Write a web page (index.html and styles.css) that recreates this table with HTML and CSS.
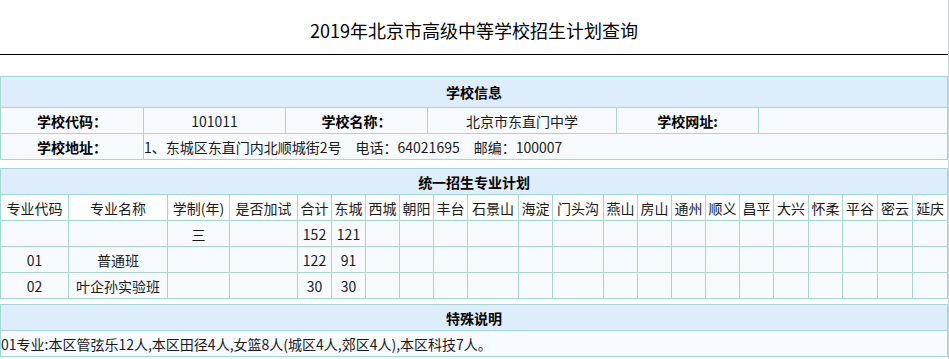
FILE: index.html
```html
<!DOCTYPE html>
<html lang="zh-CN">
<head>
<meta charset="utf-8">
<title>2019年北京市高级中等学校招生计划查询</title>
<link rel="stylesheet" href="styles.css">
</head>
<body>
<div class="page">
  <h1 class="title">2019年北京市高级中等学校招生计划查询</h1>

  <table class="tbl info">
    <colgroup>
      <col class="w143"><col class="w142"><col class="w142"><col class="w189"><col class="w142"><col class="w189">
    </colgroup>
    <tr class="head"><th colspan="6" class="sm">学校信息</th></tr>
    <tr>
      <td class="lbl">学校代码：</td>
      <td class="c">101011</td>
      <td class="lbl">学校名称：</td>
      <td class="c">北京市东直门中学</td>
      <td class="lbl">学校网址:</td>
      <td></td>
    </tr>
    <tr>
      <td class="lbl">学校地址：</td>
      <td colspan="5" class="l">1、东城区东直门内北顺城街2号　电话：64021695　邮编：100007</td>
    </tr>
  </table>

  <table class="tbl plan">
    <colgroup>
      <col style="width:68px"><col style="width:99px"><col style="width:62px"><col style="width:68px">
      <col style="width:34px"><col style="width:34px"><col style="width:34px"><col style="width:34px"><col style="width:34px">
      <col style="width:51px"><col style="width:34px"><col style="width:51px">
      <col style="width:34px"><col style="width:34px"><col style="width:34px"><col style="width:34px"><col style="width:34px">
      <col style="width:35px"><col style="width:34px"><col style="width:35px"><col style="width:35px"><col style="width:35px">
    </colgroup>
    <tr class="head"><th colspan="22">统一招生专业计划</th></tr>
    <tr class="cols">
      <td>专业代码</td><td>专业名称</td><td>学制(年)</td><td>是否加试</td>
      <td>合计</td><td>东城</td><td>西城</td><td>朝阳</td><td>丰台</td>
      <td>石景山</td><td>海淀</td><td>门头沟</td><td>燕山</td><td>房山</td>
      <td>通州</td><td>顺义</td><td>昌平</td><td>大兴</td><td>怀柔</td>
      <td>平谷</td><td>密云</td><td>延庆</td>
    </tr>
    <tr>
      <td></td><td></td><td>三</td><td></td><td>152</td><td>121</td>
      <td></td><td></td><td></td><td></td><td></td><td></td><td></td><td></td>
      <td></td><td></td><td></td><td></td><td></td><td></td><td></td><td></td>
    </tr>
    <tr>
      <td>01</td><td>普通班</td><td></td><td></td><td>122</td><td>91</td>
      <td></td><td></td><td></td><td></td><td></td><td></td><td></td><td></td>
      <td></td><td></td><td></td><td></td><td></td><td></td><td></td><td></td>
    </tr>
    <tr>
      <td>02</td><td>叶企孙实验班</td><td></td><td></td><td>30</td><td>30</td>
      <td></td><td></td><td></td><td></td><td></td><td></td><td></td><td></td>
      <td></td><td></td><td></td><td></td><td></td><td></td><td></td><td></td>
    </tr>
  </table>

  <table class="tbl note">
    <tr class="head"><th>特殊说明</th></tr>
    <tr><td class="l note-text">01专业:本区管弦乐12人,本区田径4人,女篮8人(城区4人,郊区4人),本区科技7人。</td></tr>
  </table>
</div>
</body>
</html>
```
FILE: styles.css
```css
html, body {
  margin: 0;
  padding: 0;
  background: #ffffff;
}
body {
  font-family: "Noto Sans CJK SC", "Microsoft YaHei", sans-serif;
  color: #1a1a1a;
}
.page {
  width: 948px;
  min-height: 359px;
  border-right: 1px solid #b5dcd7;
  box-sizing: content-box;
}
.title {
  margin: 0;
  height: 55px;
  box-sizing: border-box;
  border-bottom: 1px solid #000;
  font-size: 18px;
  font-weight: normal;
  line-height: 20px;
  padding-top: 20px;
  text-align: center;
  color: #000;
  width: 948px;
}
.tbl {
  width: 948px;
  border-collapse: collapse;
  table-layout: fixed;
  font-size: 14px;
}
.tbl td, .tbl th {
  border: 1px solid #a9d6d0;
  padding: 0;
  height: 25px;
  line-height: 18px;
  background: #f7fbff;
  text-align: center;
  white-space: nowrap;
  overflow: hidden;
}
.tbl .head th {
  background: #deedfb;
  font-weight: bold;
  font-size: 14px;
  color: #000;
}
.info {
  margin-top: 21px;
}
.info .head th {
  height: 30px;
}
.info .sm {
  font-size: 12px;
}
.w143 { width: 143px; }
.w142 { width: 142px; }
.w189 { width: 189px; }
.lbl {
  font-weight: bold;
  color: #000;
}
.tbl td.l {
  text-align: left;
}
.plan {
  margin-top: 8px;
}
.plan .cols td {
  background: #fff;
}
.note {
  margin-top: 5px;
}
.note-text {
  padding-left: 1px;
}
```
